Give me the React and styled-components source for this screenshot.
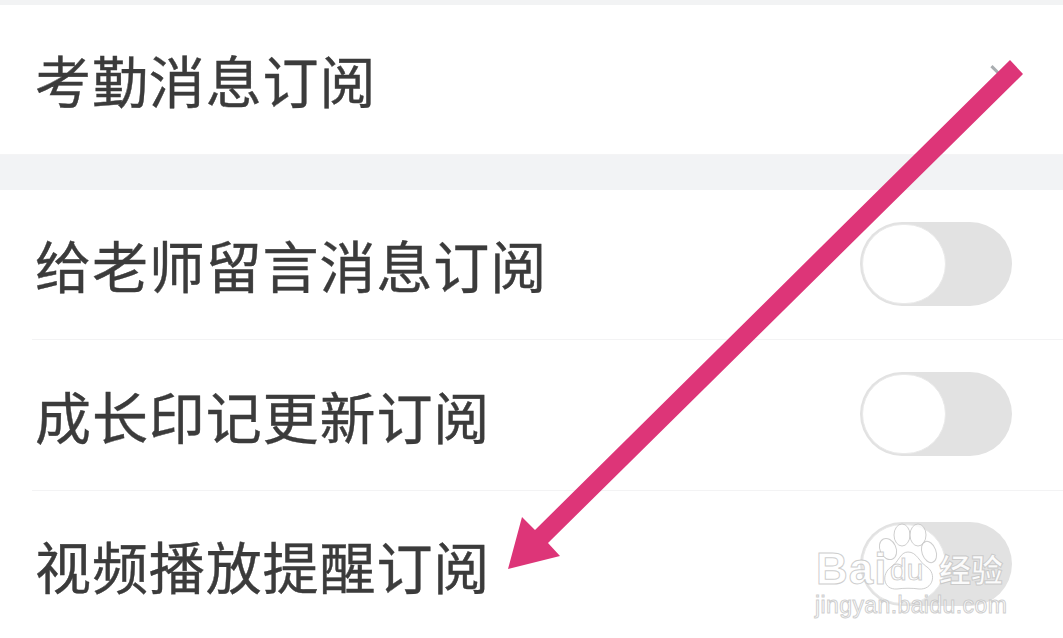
import styled, { createGlobalStyle } from 'styled-components';

const GlobalStyle = createGlobalStyle`
  html, body {
    margin: 0;
    padding: 0;
    background: #fff;
  }
`;

const Page = styled.div`
  position: relative;
  width: 1063px;
  height: 638px;
  overflow: hidden;
  background: #fff;
  font-family: "Noto Sans CJK SC", "Noto Sans", sans-serif;
`;

const TopStrip = styled.div`
  height: 5px;
  background: #f2f3f4;
`;

const SectionGap = styled.div`
  height: 35px;
  background: #f2f3f5;
  border-top: 1px solid #f4f4f5;
`;

const Row = styled.div`
  display: flex;
  align-items: center;
  justify-content: space-between;
  box-sizing: border-box;
  height: ${(p) => p.$height}px;
  margin-left: 32px;
  padding: 0 51px 2px 3px;
  border-bottom: ${(p) => (p.$divider ? '1px solid #f3f3f4' : 'none')};
`;

const Label = styled.span`
  font-size: 56px;
  line-height: 70px;
  letter-spacing: 0.9px;
  color: #3b3b3b;
  padding-top: 1px;
  -webkit-text-stroke: 0.4px #3b3b3b;
`;

const Chevron = styled.i`
  display: block;
  width: 16px;
  height: 16px;
  margin-right: 10px;
  border-top: 3px solid #a9adb0;
  border-right: 3px solid #a9adb0;
  transform: rotate(45deg);
`;

const Toggle = styled.div`
  box-sizing: border-box;
  width: 152px;
  height: 84px;
  padding: 2px;
  border-radius: 42px;
  background: #e2e2e2;
`;

const Knob = styled.div`
  box-sizing: border-box;
  width: 84px;
  height: 80px;
  border-radius: 40px;
  background: #fff;
  border: 1px solid #e9e9e9;
`;

const Arrow = styled.svg`
  position: absolute;
  left: 0;
  top: 0;
`;

const Watermark = styled.div`
  position: absolute;
  left: 815px;
  top: 522px;
  width: 200px;
  height: 100px;
`;

const Paw = styled.svg`
  position: absolute;
  left: 0;
  top: 0;
`;

const outlined = `
  position: absolute;
  color: rgba(255, 255, 255, 0.9);
  -webkit-text-stroke: 1px rgba(190, 190, 190, 0.75);
  white-space: nowrap;
  font-family: "Liberation Sans", sans-serif;
`;

const BrandBai = styled.span`
  ${outlined}
  left: 1px;
  top: 24px;
  font-size: 44px;
  line-height: 46px;
  font-weight: 700;
  letter-spacing: 1px;
`;

const BrandDu = styled.span`
  ${outlined}
  left: 75px;
  top: 33px;
  font-size: 30px;
  line-height: 30px;
`;

const BrandCn = styled.span`
  ${outlined}
  left: 124px;
  top: 26px;
  font-size: 32px;
  line-height: 40px;
  font-weight: 700;
  font-family: "Noto Sans CJK SC", sans-serif;
`;

const Domain = styled.span`
  ${outlined}
  left: 0;
  top: 68px;
  font-size: 23px;
  line-height: 30px;
  letter-spacing: 0.4px;
`;

export default function App() {
  return (
    <Page>
      <GlobalStyle />
      <TopStrip />
      <Row $height={149}>
        <Label>考勤消息订阅</Label>
        <Chevron />
      </Row>
      <SectionGap />
      <Row $height={150} $divider>
        <Label>给老师留言消息订阅</Label>
        <Toggle><Knob /></Toggle>
      </Row>
      <Row $height={151} $divider>
        <Label>成长印记更新订阅</Label>
        <Toggle><Knob /></Toggle>
      </Row>
      <Row $height={148}>
        <Label>视频播放提醒订阅</Label>
        <Toggle><Knob /></Toggle>
      </Row>

      <Arrow width="1063" height="638" viewBox="0 0 1063 638">
        <path
          d="M1010 60 L1023 74 L548 543 L560 556 L508 569 L522 517 L535 530 Z"
          fill="#dd3578"
        />
      </Arrow>

      <Watermark>
        <Paw width="200" height="100" viewBox="0 0 200 100">
          <g fill="rgba(255,255,255,0.75)" stroke="rgba(190,190,190,0.75)" strokeWidth="1">
            <ellipse cx="87" cy="13" rx="8" ry="11" />
            <ellipse cx="103" cy="13" rx="8" ry="11" />
            <ellipse cx="73" cy="27" rx="8" ry="11" transform="rotate(-25 73 27)" />
            <ellipse cx="114" cy="30" rx="7" ry="11" transform="rotate(-20 114 30)" />
            <path d="M93 30 C102 30 104 40 112 45 C122 52 118 68 104 67 C98 66 88 66 82 67 C68 68 66 52 76 45 C84 40 85 30 93 30 Z" />
          </g>
        </Paw>
        <BrandBai>Bai</BrandBai>
        <BrandDu>du</BrandDu>
        <BrandCn>经验</BrandCn>
        <Domain>jingyan.baidu.com</Domain>
      </Watermark>
    </Page>
  );
}
